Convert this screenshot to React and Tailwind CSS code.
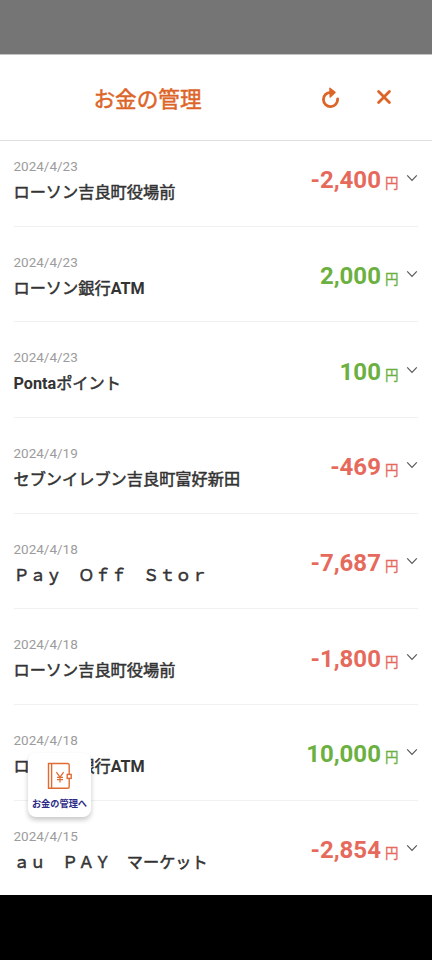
const transactions = [
  { date: '2024/4/23', name: 'ローソン吉良町役場前', amount: -2400 },
  { date: '2024/4/23', name: 'ローソン銀行ATM', amount: 2000 },
  { date: '2024/4/23', name: 'Pontaポイント', amount: 100 },
  { date: '2024/4/19', name: 'セブンイレブン吉良町富好新田', amount: -469 },
  { date: '2024/4/18', name: 'Pay\u3000Off\u3000Stor', amount: -7687 },
  { date: '2024/4/18', name: 'ローソン吉良町役場前', amount: -1800 },
  { date: '2024/4/18', name: 'ローソン銀行ATM', amount: 10000 },
  { date: '2024/4/15', name: 'au\u3000PAY\u3000マーケット', amount: -2854 },
];

// Card merchants come with full-width letters
function toFullWidth(text) {
  if (!text.includes('\u3000')) return text;
  return text.replace(/[A-Za-z]/g, (c) => String.fromCharCode(c.charCodeAt(0) + 0xfee0));
}

function ReloadIcon() {
  return (
    <svg className="h-[22px] w-5" viewBox="0 0 20 22" fill="none">
      <path d="M16.6 12.9A7.1 7.1 0 1 1 9.5 6.4" stroke="#dd6427" strokeWidth="2.8" strokeLinecap="round" />
      <path d="M8.9 2.2 14 6.4 9.2 11Z" fill="#dd6427" stroke="#dd6427" strokeWidth="1.4" strokeLinejoin="round" />
    </svg>
  );
}

function CloseIcon() {
  return (
    <svg className="h-[14px] w-[14px]" viewBox="0 0 14 14" fill="none">
      <path d="M1.6 1.6 12.4 12.4M12.4 1.6 1.6 12.4" stroke="#dd6427" strokeWidth="2.8" strokeLinecap="round" />
    </svg>
  );
}

function WalletIcon() {
  return (
    <svg className="h-[28px] w-[26px]" viewBox="0 0 26 28" fill="none" stroke="#e06c33" strokeWidth="1.4">
      <path d="M22.2 12.2V3a1.5 1.5 0 0 0-1.5-1.5H1.5v24.8h19.2a1.5 1.5 0 0 0 1.5-1.5v-8" />
      <path d="M4.6 1.5v24.8" />
      <rect x="20.2" y="12.4" width="4" height="4" />
      <path d="M9.4 10.2 13 15.2l3.6-5M10 15.3h6M10 17.6h6M13 15v5.5" strokeWidth="1.2" />
    </svg>
  );
}

// Latin letters use the bold face, Japanese glyphs a slightly thickened regular
function ShopName({ name }) {
  return (
    <p className="whitespace-pre text-[16.2px] leading-6 text-[#333333]">
      {toFullWidth(name).split(/([A-Za-z]+)/).map((part, i) => (
        <span key={i} className={i % 2 ? 'font-bold' : '[-webkit-text-stroke:0.5px_#333333]'}>
          {part}
        </span>
      ))}
    </p>
  );
}

function TransactionRow({ date, name, amount }) {
  return (
    <li className="flex h-[95.7px] shrink-0 justify-between border-b-[1.5px] border-[#f1f1f3] pt-[25px]">
      <div>
        <p className="text-[13.5px] leading-5 text-[#9c9c9c]">{date}</p>
        <div className="pt-[5px]">
          <ShopName name={name} />
        </div>
      </div>
      <div className="flex pt-[8.2px]">
        <p className={`flex items-baseline gap-[4px] ${amount < 0 ? 'text-[#e66a5c]' : 'text-[#6bb040]'}`}>
          <span className="text-[24px] leading-8 font-bold">{amount.toLocaleString('en-US')}</span>
          <span className="text-[13.5px] leading-5 [-webkit-text-stroke:0.3px_currentColor]">円</span>
        </p>
        <svg className="mt-[10px] ml-[8px] h-[8px] w-[12px]" viewBox="0 0 12 8" fill="none">
          <path d="M1.2 1.3 6 6.4 10.8 1.3" stroke="#555555" strokeWidth="1.1" />
        </svg>
      </div>
    </li>
  );
}

export default function App() {
  return (
    <div className="relative flex h-[960px] w-[432px] flex-col overflow-hidden bg-black font-['Roboto','Noto_Sans_CJK_JP',sans-serif]">
      <div className="h-[54px] shrink-0 bg-[#757575]" />

      {/* Header */}
      <header className="flex h-[87px] shrink-0 items-center border-t border-b-[1.5px] border-t-[#c4c4c4] border-b-[#dedede] bg-white pl-[93.5px]">
        <h1 className="w-[227.5px] pt-[5px] text-[21.6px] text-[#dd6427] [-webkit-text-stroke:0.5px_#dd6427]">お金の管理</h1>
        <button className="mb-[2px]">
          <ReloadIcon />
        </button>
        <button className="mb-[1px] ml-[36.3px]">
          <CloseIcon />
        </button>
      </header>

      {/* Transactions, scrolled a little under the header */}
      <main className="h-[754px] shrink-0 overflow-hidden bg-white pr-[13.6px] pl-[13.5px]">
        <ul className="-mt-[10px] flex flex-col">
          {transactions.map((t, i) => (
            <TransactionRow key={i} {...t} />
          ))}
        </ul>
      </main>

      {/* Floating shortcut */}
      <button className="absolute top-[753px] left-[28px] flex h-[64px] w-[63px] flex-col items-center rounded-[8px] bg-white pt-[9px] shadow-[0_3px_5px_rgba(0,0,0,0.22)]">
        <WalletIcon />
        <span className="mt-[6px] text-[9.2px] leading-[15px] font-bold whitespace-nowrap text-[#2b2a86]">お金の管理へ</span>
      </button>
    </div>
  );
}
